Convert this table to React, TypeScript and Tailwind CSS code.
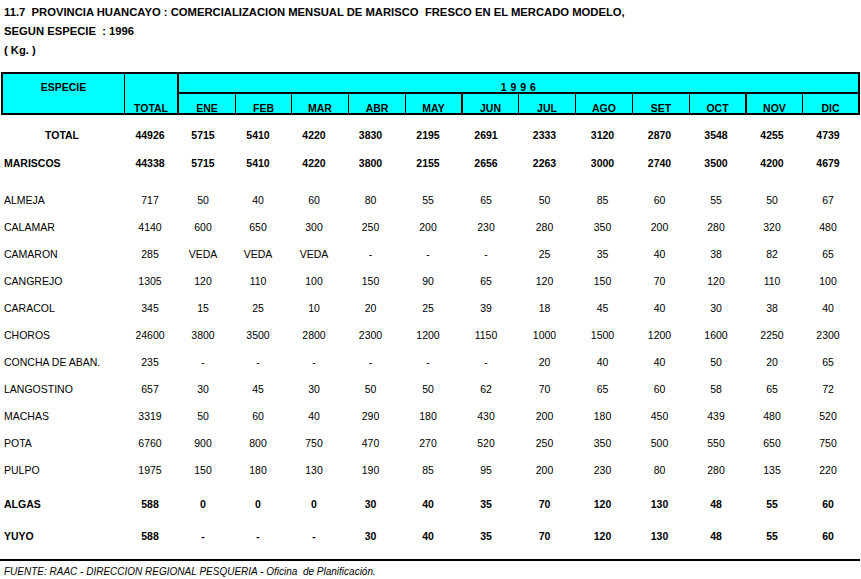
import React from "react";

type Row = { label: string; vals: string[]; bold?: boolean; center?: boolean };

const rowsA: Row[] = [
  { label: "TOTAL", bold: true, center: true, vals: ["44926", "5715", "5410", "4220", "3830", "2195", "2691", "2333", "3120", "2870", "3548", "4255", "4739"] },
];
const rowsB: Row[] = [
  { label: "MARISCOS", bold: true, vals: ["44338", "5715", "5410", "4220", "3800", "2155", "2656", "2263", "3000", "2740", "3500", "4200", "4679"] },
];
const rowsC: Row[] = [
  { label: "ALMEJA", vals: ["717", "50", "40", "60", "80", "55", "65", "50", "85", "60", "55", "50", "67"] },
  { label: "CALAMAR", vals: ["4140", "600", "650", "300", "250", "200", "230", "280", "350", "200", "280", "320", "480"] },
  { label: "CAMARON", vals: ["285", "VEDA", "VEDA", "VEDA", "-", "-", "-", "25", "35", "40", "38", "82", "65"] },
  { label: "CANGREJO", vals: ["1305", "120", "110", "100", "150", "90", "65", "120", "150", "70", "120", "110", "100"] },
  { label: "CARACOL", vals: ["345", "15", "25", "10", "20", "25", "39", "18", "45", "40", "30", "38", "40"] },
  { label: "CHOROS", vals: ["24600", "3800", "3500", "2800", "2300", "1200", "1150", "1000", "1500", "1200", "1600", "2250", "2300"] },
  { label: "CONCHA DE ABAN.", vals: ["235", "-", "-", "-", "-", "-", "-", "20", "40", "40", "50", "20", "65"] },
  { label: "LANGOSTINO", vals: ["657", "30", "45", "30", "50", "50", "62", "70", "65", "60", "58", "65", "72"] },
  { label: "MACHAS", vals: ["3319", "50", "60", "40", "290", "180", "430", "200", "180", "450", "439", "480", "520"] },
  { label: "POTA", vals: ["6760", "900", "800", "750", "470", "270", "520", "250", "350", "500", "550", "650", "750"] },
  { label: "PULPO", vals: ["1975", "150", "180", "130", "190", "85", "95", "200", "230", "80", "280", "135", "220"] },
];
const rowsD: Row[] = [
  { label: "ALGAS", bold: true, vals: ["588", "0", "0", "0", "30", "40", "35", "70", "120", "130", "48", "55", "60"] },
];
const rowsE: Row[] = [
  { label: "YUYO", bold: true, vals: ["588", "-", "-", "-", "30", "40", "35", "70", "120", "130", "48", "55", "60"] },
];

function DataRow({ r }: { r: Row }) {
  return (
    <div
      className={
        "grid h-[27px] items-center grid-cols-[124px_52px_54px_56px_56px_57px_58px_58px_59px_57px_57px_56px_56px_56px] text-[10.5px] leading-none " +
        (r.bold ? "font-bold" : "")
      }
    >
      <div className={r.center ? "text-center" : "pl-[4px]"}>{r.label}</div>
      {r.vals.map((v, i) => (
        <div key={i} className="text-center">
          {v}
        </div>
      ))}
    </div>
  );
}

const months = [
  { m: "ENE", w: "w-[57px] border-r border-black" },
  { m: "FEB", w: "w-[56px] border-r border-black" },
  { m: "MAR", w: "w-[57px] border-r border-black" },
  { m: "ABR", w: "w-[57px] border-r border-black" },
  { m: "MAY", w: "w-[57px] border-r-2 border-black" },
  { m: "JUN", w: "w-[56px] border-r border-black" },
  { m: "JUL", w: "w-[57px] border-r border-black" },
  { m: "AGO", w: "w-[57px] border-r border-black" },
  { m: "SET", w: "w-[57px] border-r border-black" },
  { m: "OCT", w: "w-[57px] border-r-2 border-black" },
  { m: "NOV", w: "w-[56px] border-r border-black" },
  { m: "DIC", w: "flex-1" },
];

export default function App() {
  return (
    <div
      className="w-[861px] h-[579px] bg-white text-black overflow-hidden"
      style={{ fontFamily: '"Liberation Sans", Arial, sans-serif' }}
    >
      <div className="pt-[3px] pl-[4px] text-[11.25px] font-bold leading-[19px]">
        <div>11.7&nbsp; PROVINCIA HUANCAYO : COMERCIALIZACION MENSUAL DE MARISCO&nbsp; FRESCO EN EL MERCADO MODELO,</div>
        <div>SEGUN ESPECIE&nbsp; : 1996</div>
        <div>( Kg. )</div>
      </div>

      <div className="mt-[12px] ml-[1px] w-[859px] h-[43px] border-2 border-black bg-[#00ffff] flex text-[10.5px] font-bold leading-none">
        <div className="w-[122px] border-r border-black text-center pt-[8px]">ESPECIE</div>
        <div className="w-[54px] border-r-2 border-black text-center pt-[29px]">TOTAL</div>
        <div className="flex-1 flex flex-col">
          <div className="h-[20px] border-b-2 border-black text-center pt-[8px] tracking-[0.5px]">1 9 9 6</div>
          <div className="flex-1 flex">
            {months.map((x) => (
              <div key={x.m} className={x.w + " text-center pt-[9px]"}>
                {x.m}
              </div>
            ))}
          </div>
        </div>
      </div>

      <div className="mt-[7px]">
        {rowsA.map((r) => (
          <DataRow key={r.label} r={r} />
        ))}
      </div>
      <div className="mt-[1px]">
        {rowsB.map((r) => (
          <DataRow key={r.label} r={r} />
        ))}
      </div>
      <div className="mt-[10px]">
        {rowsC.map((r) => (
          <DataRow key={r.label} r={r} />
        ))}
      </div>
      <div className="mt-[7px]">
        {rowsD.map((r) => (
          <DataRow key={r.label} r={r} />
        ))}
      </div>
      <div className="mt-[5px]">
        {rowsE.map((r) => (
          <DataRow key={r.label} r={r} />
        ))}
      </div>

      <div className="mt-[9px] w-[860px] h-[2px] bg-black" />
      <div className="mt-[5px] pl-[4px] text-[10px] italic leading-[12px]">
        FUENTE: RAAC - DIRECCION REGIONAL PESQUERIA - Oficina&nbsp; de Planificación.
      </div>
    </div>
  );
}
